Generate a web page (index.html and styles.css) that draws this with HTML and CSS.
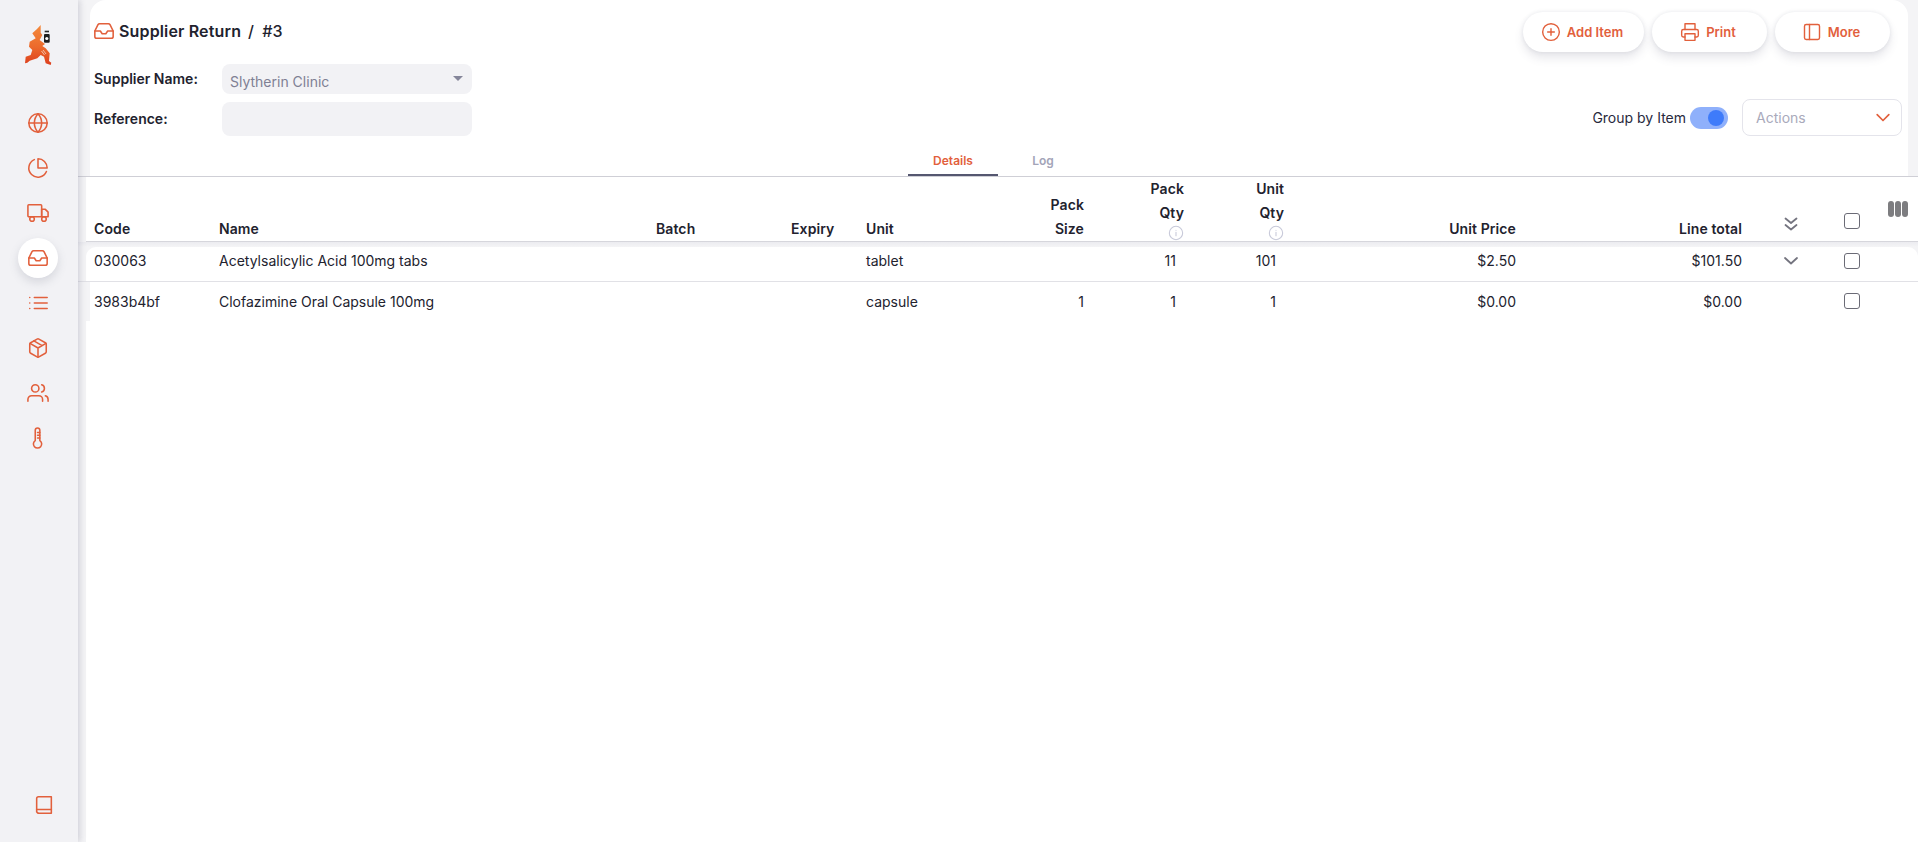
FILE: index.html
```html
<!DOCTYPE html>
<html lang="en">
<head>
<meta charset="utf-8">
<title>Supplier Return #3</title>
<link rel="stylesheet" href="styles.css">
</head>
<body>
<div class="app">
  <nav class="sidebar">
    <div class="logo">
      <svg width="30" height="42" viewBox="0 0 30 42">
        <defs><linearGradient id="lg" x1="0" y1="0" x2="0" y2="1"><stop offset="0" stop-color="#f48a3c"/><stop offset=".55" stop-color="#ec6a2c"/><stop offset="1" stop-color="#dd3f1e"/></linearGradient></defs>
        <path fill="url(#lg)" d="M17.700 1L14 5 9.300 9.300l3.400 5-6 3.400-.7 5 3.300 3.300L7.700 31l-5 1.700L2 39.300l2.300-.6 2.400-2 7.600-2.400 3.400-3.300 3.300 1.700 1.700 6.600 5 1.700.6-2.300-2.300-1.700.7-7.700-4-5-3.400-2.300 2.700-2-2.700-2-2.600-2 2.600-5-1.600-2.300z"/>
        <path fill="none" stroke="#f6d9c8" stroke-width=".8" d="M20 26l3 4M18.500 27l3 4"/>
        <rect x="21.700" y="6.700" width="4.300" height="1.600" fill="#2a2a2a"/>
        <rect x="21" y="10" width="5.700" height="8.700" rx="1" fill="#1f1f1f"/>
        <circle cx="23.800" cy="14.500" r="1.600" fill="#fff"/>
      </svg>
    </div>
    <ul class="nav-list">
      <li class="nav-item"><svg class="icon" viewBox="0 0 24 24"><circle cx="12" cy="12" r="10"/><path d="M2 12h20"/><path d="M12 2a15 15 0 0 1 4 10 15 15 0 0 1-4 10 15 15 0 0 1-4-10 15 15 0 0 1 4-10z"/></svg></li>
      <li class="nav-item"><svg class="icon" viewBox="0 0 24 24"><path d="M21.210 15.890A10 10 0 1 1 8 2.830"/><path d="M22 12A10 10 0 0 0 12 2v10z"/></svg></li>
      <li class="nav-item"><svg class="icon" viewBox="0 0 24 24"><rect x="1" y="3" width="15" height="13" rx="1"/><path d="M16 8h4l3 3v5h-7z"/><circle cx="5.500" cy="18.500" r="2.500"/><circle cx="18.500" cy="18.500" r="2.500"/></svg></li>
      <li class="nav-item active"><span class="nav-disc"><svg class="icon" viewBox="0 0 24 24"><path d="M22 12h-6l-2 3h-4l-2-3H2"/><path d="M5.450 5.110L2 12v6a2 2 0 0 0 2 2h16a2 2 0 0 0 2-2v-6l-3.450-6.890A2 2 0 0 0 16.760 4H7.240a2 2 0 0 0-1.790 1.110z"/></svg></span></li>
      <li class="nav-item"><svg class="icon" viewBox="0 0 24 24"><path d="M8 6h14M8 12h14M8 18h14M3 6h.01M3 12h.01M3 18h.01"/></svg></li>
      <li class="nav-item"><svg class="icon" viewBox="0 0 24 24"><path d="M21 16V8a2 2 0 0 0-1-1.730l-7-4a2 2 0 0 0-2 0l-7 4A2 2 0 0 0 3 8v8a2 2 0 0 0 1 1.730l7 4a2 2 0 0 0 2 0l7-4A2 2 0 0 0 21 16z"/><path d="M3.300 7L12 12l8.700-5M12 22V12M7.500 4.300l9 5.100"/></svg></li>
      <li class="nav-item"><svg class="icon" viewBox="0 0 24 24"><path d="M17 21v-2a4 4 0 0 0-4-4H5a4 4 0 0 0-4 4v2"/><circle cx="9" cy="7" r="4"/><path d="M23 21v-2a4 4 0 0 0-3-3.870M16 3.130a4 4 0 0 1 0 7.750"/></svg></li>
      <li class="nav-item"><svg class="icon" viewBox="0 0 24 24"><path d="M14 14.760V3.500a2.500 2.500 0 0 0-5 0v11.260a4.500 4.500 0 1 0 5 0z"/><path d="M11.500 6h2.500M11.500 9h2.500M11.500 12h2.500"/></svg></li>
    </ul>
    <div class="nav-bottom"><svg class="icon" viewBox="0 0 24 24"><path d="M4 19.500V5a2 2 0 0 1 2-2h14v18H6.500A2.500 2.500 0 0 1 4 18.500"/><path d="M4 17h16"/></svg></div>
  </nav>

  <main class="main">
    <section class="head">
      <div class="head-inner">
        <div class="head-top">
          <div class="head-left">
            <h1 class="title">
              <svg class="icon title-icon" viewBox="0 0 24 24"><path d="M22 12h-6l-2 3h-4l-2-3H2"/><path d="M5.450 5.110L2 12v6a2 2 0 0 0 2 2h16a2 2 0 0 0 2-2v-6l-3.450-6.890A2 2 0 0 0 16.760 4H7.240a2 2 0 0 0-1.790 1.110z"/></svg>
              <span>Supplier Return</span><span class="title-sep">/</span><span class="title-num">#3</span>
            </h1>
            <div class="form">
              <label class="form-label">Supplier Name:</label>
              <div class="field field-select"><span>Slytherin Clinic</span><i class="caret"></i></div>
              <label class="form-label">Reference:</label>
              <div class="field field-ref"></div>
            </div>
          </div>
          <div class="head-right">
            <div class="buttons">
              <button class="btn btn-add"><svg class="icon btn-icon" viewBox="0 0 24 24"><circle cx="12" cy="12" r="10"/><path d="M12 8v8M8 12h8"/></svg>Add Item</button>
              <button class="btn btn-print"><svg class="icon btn-icon" viewBox="0 0 24 24"><path d="M6 9V2h12v7"/><path d="M6 18H4a2 2 0 0 1-2-2v-5a2 2 0 0 1 2-2h16a2 2 0 0 1 2 2v5a2 2 0 0 1-2 2h-2"/><rect x="6" y="14" width="12" height="8"/></svg>Print</button>
              <button class="btn btn-more"><svg class="icon btn-icon" viewBox="0 0 24 24"><rect x="3" y="3" width="18" height="18" rx="2"/><path d="M9 3v18"/></svg>More</button>
            </div>
            <div class="controls">
              <span class="group-label">Group by Item</span>
              <span class="toggle"><i class="knob"></i></span>
              <div class="actions"><span>Actions</span><svg class="icon actions-chev" viewBox="0 0 24 24"><path d="M5 8l7 7 7-7"/></svg></div>
            </div>
          </div>
        </div>
        <div class="tabs">
          <span class="tab tab-active">Details</span>
          <span class="tab">Log</span>
        </div>
      </div>
    </section>

    <section class="body">
      <div class="grid grid-head">
        <div>Code</div>
        <div>Name</div>
        <div>Batch</div>
        <div>Expiry</div>
        <div>Unit</div>
        <div class="num">Pack<br>Size</div>
        <div class="num qty-head">Pack<br>Qty<svg class="info" viewBox="0 0 24 24"><circle cx="12" cy="12" r="10"/><path d="M12 16v-5M12 8h.01"/></svg></div>
        <div class="num qty-head">Unit<br>Qty<svg class="info" viewBox="0 0 24 24"><circle cx="12" cy="12" r="10"/><path d="M12 16v-5M12 8h.01"/></svg></div>
        <div class="num">Unit Price</div>
        <div class="num">Line total</div>
        <div class="center chev-head"><svg class="chev chev-double" viewBox="0 0 14 14"><path d="M1.500 1.500L7 6l5.500-4.500M1.500 8L7 12.500 12.500 8"/></svg></div>
        <div class="center check-head"><span class="check"></span></div>
        <div class="col-btn"><i></i><i></i><i></i></div>
      </div>
      <div class="rows">
        <div class="grid row row-first">
          <div>030063</div>
          <div>Acetylsalicylic Acid 100mg tabs</div>
          <div></div>
          <div></div>
          <div>tablet</div>
          <div class="num"></div>
          <div class="num qty">11</div>
          <div class="num qty">101</div>
          <div class="num">$2.50</div>
          <div class="num">$101.50</div>
          <div class="center"><svg class="chev chev-row" viewBox="0 0 14 8"><path d="M1 1l6 5.500L13 1"/></svg></div>
          <div class="center"><span class="check"></span></div>
        </div>
        <div class="row-line"></div>
        <div class="grid row row-second">
          <div>3983b4bf</div>
          <div>Clofazimine Oral Capsule 100mg</div>
          <div></div>
          <div></div>
          <div>capsule</div>
          <div class="num">1</div>
          <div class="num qty">1</div>
          <div class="num qty">1</div>
          <div class="num">$0.00</div>
          <div class="num">$0.00</div>
          <div class="center"></div>
          <div class="center"><span class="check"></span></div>
        </div>
      </div>
    </section>
  </main>
</div>
</body>
</html>
```
FILE: styles.css
```css
* { box-sizing: border-box; }
html, body { height: 100%; }
body {
  margin: 0;
  overflow: hidden;
  background: #fff;
  color: #22222e;
  font-family: Inter, "Liberation Sans", sans-serif;
  font-size: 14px;
}
.app { display: flex; height: 100vh; }

.icon {
  width: 22px;
  height: 22px;
  fill: none;
  stroke: #e2603c;
  stroke-width: 1.7;
  stroke-linecap: round;
  stroke-linejoin: round;
  display: block;
}

/* Sidebar */
.sidebar {
  width: 78px;
  flex: none;
  background: #f2f2f5;
  box-shadow: 2px 0 6px rgba(85, 87, 112, .22);
  position: relative;
  z-index: 2;
  display: flex;
  flex-direction: column;
}
.logo { padding: 24px 0 0 23px; height: 100px; }
.logo svg { display: block; }
.nav-list { list-style: none; margin: 0; padding: 0; }
.nav-item {
  height: 45px;
  padding-right: 2px;
  display: flex;
  align-items: center;
  justify-content: center;
}
.nav-disc {
  width: 40px;
  height: 40px;
  border-radius: 50%;
  background: #fff;
  box-shadow: 0 4px 10px rgba(85, 87, 112, .18);
  display: flex;
  align-items: center;
  justify-content: center;
}
.nav-bottom { margin-top: auto; padding: 0 0 26px 33px; }

/* Main */
.main {
  flex: 1;
  min-width: 0;
  background: #f4f4f6;
  display: flex;
  flex-direction: column;
}
.head { height: 177px; flex: none; border-bottom: 1px solid #cfcfd6; }
.head-inner {
  height: 176px;
  margin: 0 10px 0 12px;
  padding-left: 4px;
  background: #fff;
  border-radius: 16px 16px 0 0;
  display: flex;
  flex-direction: column;
}
.head-top { height: 142px; display: flex; justify-content: space-between; }
.title {
  margin: 19px 0 0;
  height: 24px;
  display: flex;
  align-items: center;
  font-size: 16px;
  font-weight: 600;
  line-height: 24px;
  letter-spacing: .15px;
}
.title-icon { width: 22px; height: 22px; margin: 0 4px 0 -1px; }
.title-sep { margin: 0 8px 0 7px; font-weight: 500; }
.title-num { font-weight: 500; }
.form {
  margin-top: 21px;
  display: grid;
  grid-template-columns: 128px 250px;
  grid-template-rows: 30px 34px;
  row-gap: 8px;
  align-items: center;
}
.form-label { font-weight: 600; font-size: 14px; line-height: 18px; }
.field { height: 100%; background: #f2f2f5; border-radius: 8px; }
.field-select {
  display: flex;
  align-items: center;
  justify-content: space-between;
  padding: 4px 9px 0 8px;
  color: #7f8094;
  font-size: 14px;
}
.caret {
  margin-top: -6px;
  width: 0;
  height: 0;
  border-left: 5px solid transparent;
  border-right: 5px solid transparent;
  border-top: 5px solid #85869a;
}
.head-right {
  padding: 12px 6px 0 0;
  display: flex;
  flex-direction: column;
  align-items: flex-end;
}
.buttons { display: flex; gap: 8px; margin-right: 12px; }
.btn {
  height: 40px;
  border: 0;
  border-radius: 20px;
  background: #fff;
  box-shadow: 0 6px 10px rgba(85, 87, 112, .14), 0 0 4px rgba(85, 87, 112, .12);
  color: #e2603c;
  font-family: inherit;
  font-size: 13px;
  font-weight: 600;
  display: flex;
  align-items: center;
  justify-content: center;
  gap: 6px;
  padding: 0 3px 0 0;
}
.btn-add { width: 121px; }
.btn-print { width: 115px; }
.btn-more { width: 115px; }
.btn-icon { width: 20px; height: 20px; }
.controls { margin-top: 47px; display: flex; align-items: center; }
.group-label { color: #28293d; font-size: 14px; margin-right: 4px; }
.toggle {
  width: 38px;
  height: 22px;
  border-radius: 11px;
  background: #8fb0fb;
  display: flex;
  align-items: center;
  justify-content: flex-end;
  padding-right: 4px;
  margin-right: 14px;
}
.knob { width: 16px; height: 16px; border-radius: 50%; background: #3e7bfa; }
.actions {
  width: 160px;
  height: 37px;
  border: 1px solid #e4e4eb;
  border-radius: 8px;
  display: flex;
  align-items: center;
  justify-content: space-between;
  padding: 0 8px 0 13px;
  color: #a9aabb;
  font-size: 14px;
}
.actions-chev { stroke-width: 2; width: 20px; height: 20px; }
.tabs { height: 34px; display: flex; justify-content: center; padding-right: 6px; }
.tab {
  width: 90px;
  height: 34px;
  padding-top: 11px;
  text-align: center;
  font-size: 12px;
  font-weight: 600;
  line-height: 16px;
  color: #a3a4b8;
}
.tab-active { color: #e2603c; border-bottom: 2px solid #555770; }

/* Table */
.body { flex: 1; margin-left: 8px; background: #fff; }
.grid {
  display: grid;
  grid-template-columns: 125px 437px 135px 75px 122px 96px 100px 100px 232px 226px 98px 24px 1fr;
}
.grid-head {
  height: 65px;
  padding-left: 8px;
  align-items: end;
  font-weight: 600;
  line-height: 24px;
  letter-spacing: .1px;
  border-bottom: 1px solid #d6d6dc;
}
.num { text-align: right; }
.center { display: flex; justify-content: center; align-items: center; }
.qty { padding-right: 8px; }
.qty-head { position: relative; padding-bottom: 16px; }
.info {
  position: absolute;
  right: 0;
  bottom: 0;
  width: 16px;
  height: 16px;
  fill: none;
  stroke: #c7c9d9;
  stroke-width: 1.6;
  stroke-linecap: round;
}
.chev { fill: none; stroke: #74747f; stroke-width: 1.8; stroke-linecap: round; stroke-linejoin: round; display: block; }
.chev-double { width: 14px; height: 14px; }
.chev-head { padding-bottom: 10px; }
.check-head { padding-bottom: 12px; }
.chev-row { width: 14px; height: 8px; }
.check {
  width: 16px;
  height: 16px;
  border: 1.3px solid #6b6b76;
  border-radius: 3px;
  background: #fff;
  display: block;
}
.col-btn { display: flex; gap: 1px; justify-self: start; align-self: start; margin: 24px 0 0 24px; }
.col-btn i { width: 6px; height: 16px; border-radius: 3px; background: #7d7d80; }
.rows {
  margin-left: -8px;
  padding-top: 5px;
  background: linear-gradient(#ececf0, #f4f4f6 5px, #f4f4f6);
}
.row { align-items: center; background: #fff; }
.row-first {
  height: 34px;
  margin-left: 8px;
  padding: 0 0 7px 8px;
  border-radius: 10px 10px 0 0;
}
.row-line { height: 1px; background: #e1e1e6; }
.row-second { height: 39px; margin-left: 12px; padding: 0 0 1px 4px; }
```
